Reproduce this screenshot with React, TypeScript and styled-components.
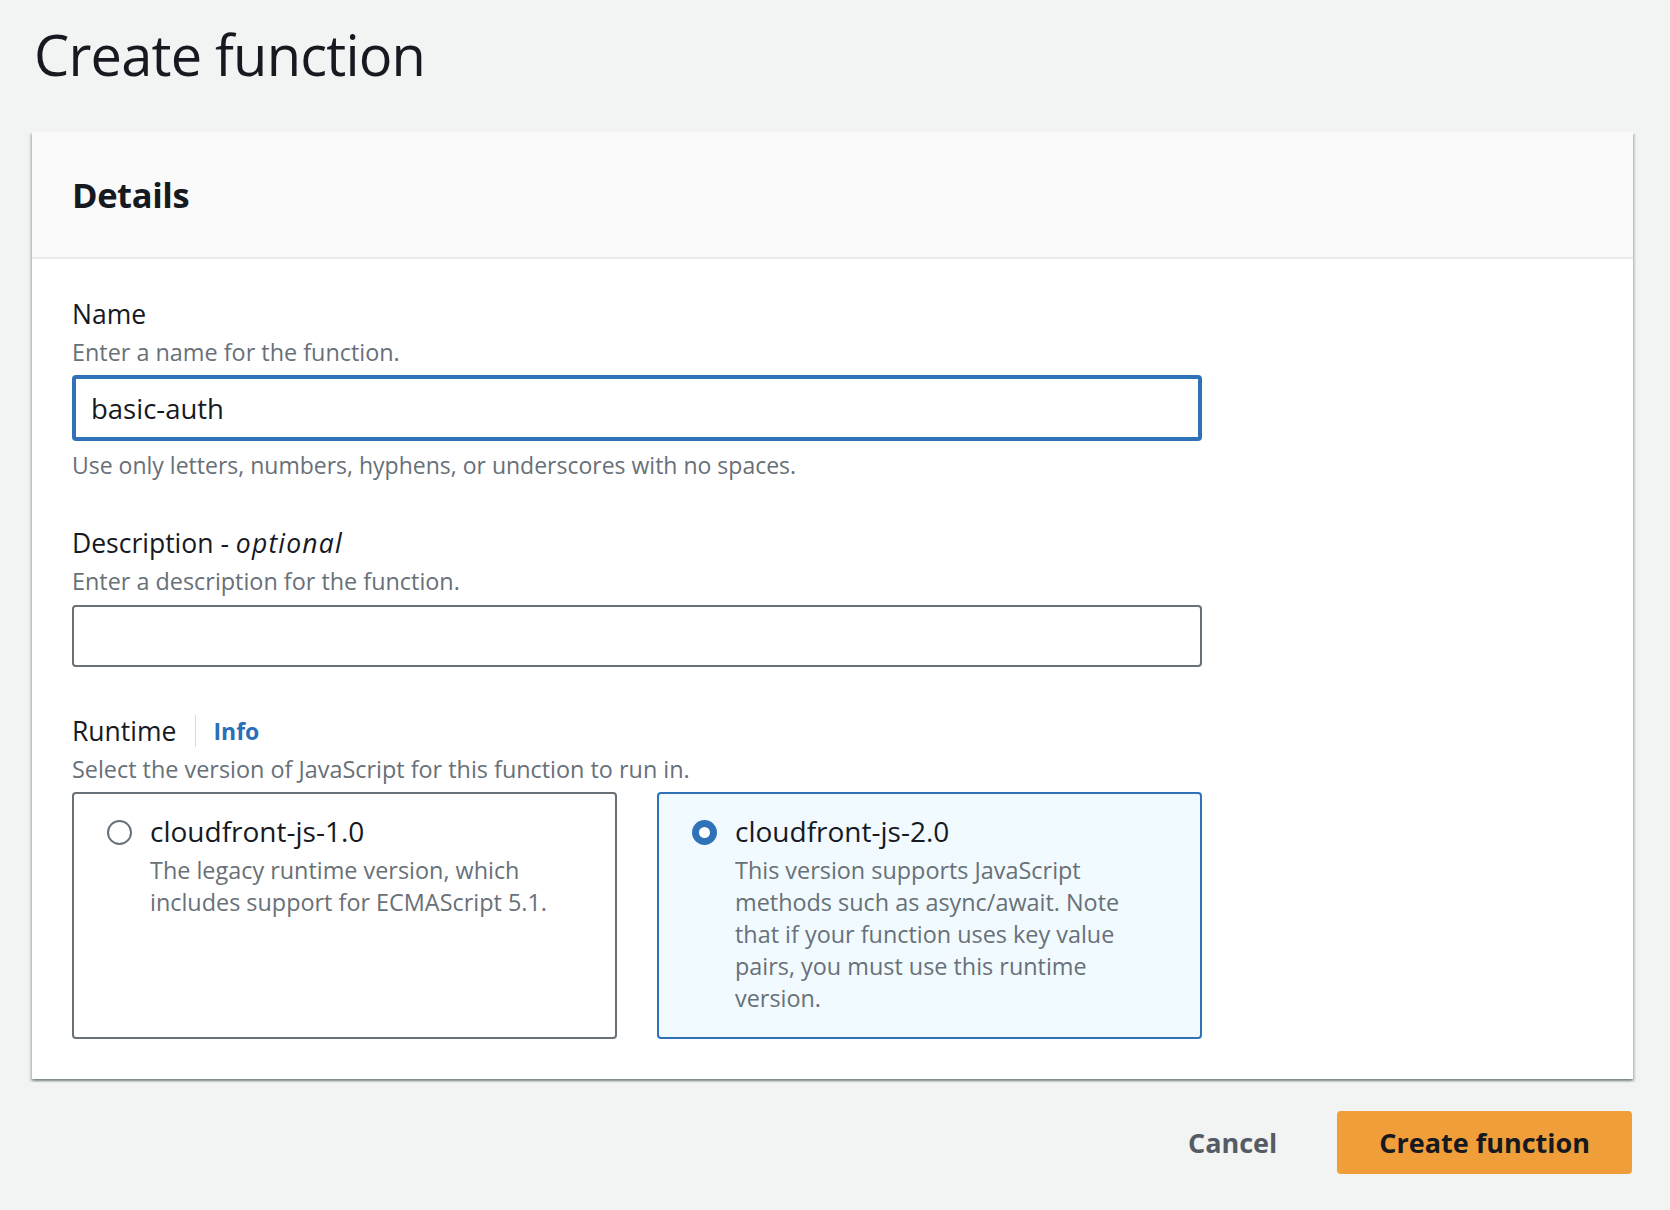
import React from "react";
import styled, { createGlobalStyle } from "styled-components";

const GlobalStyle = createGlobalStyle`
  html, body {
    margin: 0;
    padding: 0;
    background: #f2f3f3;
  }
  body {
    font-family: "Open Sans", "Noto Sans", sans-serif;
    color: #16191f;
  }
  * { box-sizing: border-box; }
`;

const Page = styled.div`
  width: 1670px;
  min-height: 1210px;
  padding: 0 37px 0 32px;
`;

const Title = styled.h1`
  margin: 0;
  height: 132px;
  padding: 14px 0 0 2px;
  font-size: 56px;
  line-height: 80px;
  font-weight: 400;
  letter-spacing: -0.8px;
  color: #16191f;
`;

const Panel = styled.section`
  background: #ffffff;
  box-shadow: 0 2px 2px 0 rgba(0, 28, 36, 0.3), 2px 2px 2px 0 rgba(0, 28, 36, 0.15),
    -2px 2px 2px 0 rgba(0, 28, 36, 0.15);
`;

const PanelHeader = styled.header`
  height: 127px;
  background: #fafafa;
  border-bottom: 2px solid #eaeded;
  display: flex;
  align-items: center;
  padding: 0 40px;
`;

const PanelTitle = styled.h2`
  margin: 0;
  font-size: 34.5px;
  font-weight: 700;
  letter-spacing: -0.4px;
  color: #16191f;
`;

const PanelBody = styled.div`
  padding: 37px 40px 40px 40px;
  display: flex;
  flex-direction: column;
`;

const Field = styled.div<{ $gap?: number }>`
  width: 1130px;
  display: flex;
  flex-direction: column;
  margin-top: ${(p) => p.$gap ?? 0}px;
`;

const LabelRow = styled.div`
  display: flex;
  align-items: center;
  height: 36px;
`;

const Label = styled.label`
  font-size: 26.5px;
  line-height: 36px;
  color: #16191f;
`;

const Optional = styled.em`
  font-style: italic;
  letter-spacing: 1.2px;
`;

const InfoDivider = styled.span`
  width: 1px;
  height: 32px;
  background: #d5dbdb;
  margin: 0 17px 0 19px;
`;

const InfoLink = styled.a`
  font-size: 23px;
  font-weight: 700;
  color: #2a70b8;
  text-decoration: none;
`;

const Hint = styled.div<{ $after?: number }>`
  font-size: 23.4px;
  line-height: 32px;
  color: #687078;
  margin-top: 4px;
  margin-bottom: ${(p) => p.$after ?? 7}px;
`;

const Constraint = styled.div`
  font-size: 23px;
  line-height: 32px;
  color: #687078;
  margin-top: 8px;
`;

const TextInput = styled.input<{ $focused?: boolean }>`
  width: 100%;
  height: ${(p) => (p.$focused ? 66 : 62)}px;
  border: ${(p) => (p.$focused ? "4px solid #2f72b8" : "2px solid #687078")};
  border-radius: 4px;
  padding: 0 ${(p) => (p.$focused ? 15 : 17)}px;
  font-family: inherit;
  font-size: 27.5px;
  color: #16191f;
  background: #ffffff;
  outline: none;
`;

const CardGrid = styled.div`
  display: grid;
  grid-template-columns: 1fr 1fr;
  gap: 40px;
  margin-top: 7px;
`;

const Card = styled.label<{ $selected?: boolean }>`
  display: flex;
  gap: 18px;
  min-height: 247px;
  padding: 19px 28px 20px 33px;
  border: 2px solid ${(p) => (p.$selected ? "#2f72b8" : "#687078")};
  border-radius: 4px;
  background: ${(p) => (p.$selected ? "#f1faff" : "#ffffff")};
  cursor: pointer;
`;

const Radio = styled.span<{ $checked?: boolean }>`
  flex: none;
  width: 25px;
  height: 25px;
  margin-top: 7px;
  border-radius: 50%;
  border: ${(p) => (p.$checked ? "7px solid #2f72b8" : "2px solid #687078")};
  background: #ffffff;
`;

const CardText = styled.div`
  display: flex;
  flex-direction: column;
`;

const CardTitle = styled.div`
  font-size: 28px;
  line-height: 36px;
  color: #16191f;
`;

const CardDesc = styled.div`
  font-size: 23.4px;
  line-height: 32px;
  color: #687078;
  margin-top: 5px;
`;

const Actions = styled.div`
  display: flex;
  justify-content: flex-end;
  align-items: center;
  gap: 22px;
  margin-top: 32px;
  padding-right: 1px;
`;

const Button = styled.button<{ $primary?: boolean }>`
  height: 63px;
  border-radius: 4px;
  border: none;
  padding: 0 ${(p) => (p.$primary ? 42 : 38)}px;
  font-family: inherit;
  font-size: 27px;
  font-weight: 700;
  color: ${(p) => (p.$primary ? "#16191f" : "#545b64")};
  background: ${(p) => (p.$primary ? "#f09e3a" : "transparent")};
  cursor: pointer;
`;

export default function App() {
  return (
    <>
      <GlobalStyle />
      <Page>
        <Title>Create function</Title>
        <Panel>
          <PanelHeader>
            <PanelTitle>Details</PanelTitle>
          </PanelHeader>
          <PanelBody>
            <Field>
              <LabelRow>
                <Label>Name</Label>
              </LabelRow>
              <Hint>Enter a name for the function.</Hint>
              <TextInput $focused defaultValue="basic-auth" />
              <Constraint>Use only letters, numbers, hyphens, or underscores with no spaces.</Constraint>
            </Field>
            <Field $gap={44}>
              <LabelRow>
                <Label>
                  Description - <Optional>optional</Optional>
                </Label>
              </LabelRow>
              <Hint $after={8}>Enter a description for the function.</Hint>
              <TextInput />
            </Field>
            <Field $gap={46}>
              <LabelRow>
                <Label>Runtime</Label>
                <InfoDivider />
                <InfoLink href="#">Info</InfoLink>
              </LabelRow>
              <Hint $after={0}>Select the version of JavaScript for this function to run in.</Hint>
              <CardGrid>
                <Card>
                  <Radio />
                  <CardText>
                    <CardTitle>cloudfront-js-1.0</CardTitle>
                    <CardDesc>
                      The legacy runtime version, which
                      <br />
                      includes support for ECMAScript 5.1.
                    </CardDesc>
                  </CardText>
                </Card>
                <Card $selected>
                  <Radio $checked />
                  <CardText>
                    <CardTitle>cloudfront-js-2.0</CardTitle>
                    <CardDesc>
                      This version supports JavaScript
                      <br />
                      methods such as async/await. Note
                      <br />
                      that if your function uses key value
                      <br />
                      pairs, you must use this runtime
                      <br />
                      version.
                    </CardDesc>
                  </CardText>
                </Card>
              </CardGrid>
            </Field>
          </PanelBody>
        </Panel>
        <Actions>
          <Button>Cancel</Button>
          <Button $primary>Create function</Button>
        </Actions>
      </Page>
    </>
  );
}
